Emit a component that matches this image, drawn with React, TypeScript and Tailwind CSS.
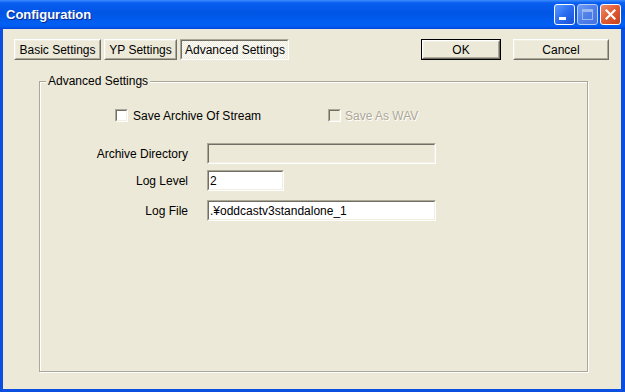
import type { ReactNode } from "react";

const font = { fontFamily: '"Liberation Sans", Arial, sans-serif' };

function RaisedButton({ width, children, isDefault }: { width: string; children: ReactNode; isDefault?: boolean }) {
  const bevel = (
    <div className="flex h-full w-full border border-t-white border-l-white border-r-[#716f64] border-b-[#716f64]">
      <div className="flex h-full w-full items-center justify-center border border-t-[#f1efe2] border-l-[#f1efe2] border-r-[#aca899] border-b-[#aca899] text-[12px] leading-none text-black">
        {children}
      </div>
    </div>
  );
  return (
    <div className={`h-[21px] shrink-0 ${width}`}>
      {isDefault ? <div className="h-full w-full border border-black">{bevel}</div> : bevel}
    </div>
  );
}

function PressedButton({ width, children }: { width: string; children: ReactNode }) {
  return (
    <div className={`h-[21px] shrink-0 ${width}`}>
      <div className="flex h-full w-full border border-t-[#aca899] border-l-[#aca899] border-r-white border-b-white">
        <div className="flex h-full w-full items-center justify-center border border-t-[#716f64] border-l-[#716f64] border-r-[#f1efe2] border-b-[#f1efe2] bg-[repeating-conic-gradient(#ffffff_0_25%,#ece9d8_0_50%)] bg-[length:2px_2px] pt-[1px] pl-[1px] text-[12px] leading-none text-black">
          {children}
        </div>
      </div>
    </div>
  );
}

function Sunken({ className, children }: { className: string; children?: ReactNode }) {
  return (
    <div className={`shrink-0 border border-t-[#aca899] border-l-[#aca899] border-r-white border-b-white ${className}`}>
      <div className="h-full w-full border border-t-[#716f64] border-l-[#716f64] border-r-[#f1efe2] border-b-[#f1efe2]">
        {children}
      </div>
    </div>
  );
}

function Checkbox({ disabled }: { disabled?: boolean }) {
  return (
    <div className="h-[13px] w-[13px] shrink-0 border border-t-[#aca899] border-l-[#aca899] border-r-white border-b-white">
      <div className={`h-full w-full border border-t-[#716f64] border-l-[#716f64] border-r-[#f1efe2] border-b-[#f1efe2] ${disabled ? "bg-[#ece9d8]" : "bg-white"}`} />
    </div>
  );
}

function TitleButtons() {
  return (
    <div className="flex items-center gap-[2px]">
      <div className="flex h-[21px] w-[21px] items-end rounded-[3px] border border-white bg-gradient-to-br from-[#5b9cff] via-[#2a6cf0] to-[#1a4fd4] pb-[4px] pl-[4px]">
        <div className="h-[3px] w-[7px] bg-white" />
      </div>
      <div className="flex h-[21px] w-[21px] items-center justify-center rounded-[3px] border border-[#b9cdf6] bg-gradient-to-br from-[#6d9cf6] via-[#4f7fe8] to-[#4573e2]">
        <div className="h-[11px] w-[11px] border border-t-[3px] border-[#9cb8f0]" />
      </div>
      <div className="flex h-[21px] w-[21px] items-center justify-center rounded-[3px] border border-white bg-gradient-to-br from-[#ee8a68] via-[#e05a32] to-[#c7401a]">
        <svg width="11" height="11" viewBox="0 0 11 11">
          <path d="M1.5 1.5 L9.5 9.5 M9.5 1.5 L1.5 9.5" stroke="#ffffff" strokeWidth="2.2" strokeLinecap="square" />
        </svg>
      </div>
    </div>
  );
}

export default function App() {
  return (
    <div style={font} className="flex h-[392px] w-[625px] flex-col bg-[#0a4fe0]">
      {/* Title bar */}
      <div className="flex h-[29px] shrink-0 items-center justify-between bg-[linear-gradient(180deg,#3c8dff_0%,#0a5ef0_10%,#0055e5_45%,#0060f4_85%,#0058ee_93%,#0042d6_100%)] pl-[6px] pr-[4px]">
        <span className="text-[13px] font-bold leading-none text-white [text-shadow:1px_1px_0_#0a2a8a]">Configuration</span>
        <TitleButtons />
      </div>

      {/* Client area */}
      <div className="mb-[3px] ml-[3px] mr-[4px] flex flex-1 flex-col bg-[#ece9d8] text-[12px] text-black">
        <div className="mt-[10px] flex pl-[11px] pr-[12px]">
          <RaisedButton width="w-[87px]">Basic Settings</RaisedButton>
          <div className="ml-[3px]">
            <RaisedButton width="w-[73px]">YP Settings</RaisedButton>
          </div>
          <div className="ml-[3px]">
            <PressedButton width="w-[109px]">Advanced Settings</PressedButton>
          </div>
          <div className="ml-auto">
            <RaisedButton width="w-[80px]" isDefault>OK</RaisedButton>
          </div>
          <div className="ml-[12px]">
            <RaisedButton width="w-[96px]">Cancel</RaisedButton>
          </div>
        </div>

        <fieldset className="ml-[36px] mt-[14px] h-[298px] w-[549px] border border-[#aca899] shadow-[inset_1px_1px_0_#ffffff,1px_1px_0_#ffffff]">
          <legend className="ml-[6px] bg-[#ece9d8] px-[2px] text-[12px] leading-[14px]">Advanced Settings</legend>

          <div className="mt-[21px] flex items-center">
            <div className="ml-[75px] flex w-[213px] items-center">
              <Checkbox />
              <span className="ml-[5px] leading-none">Save Archive Of Stream</span>
            </div>
            <div className="flex items-center">
              <Checkbox disabled />
              <span className="ml-[4px] leading-none text-[#aca899] [text-shadow:1px_1px_0_#ffffff]">Save As WAV</span>
            </div>
          </div>

          <div className="mt-[21px] flex items-center">
            <span className="w-[148px] text-right leading-none">Archive Directory</span>
            <Sunken className="ml-[19px] h-[21px] w-[229px] bg-[#ece9d8]" />
          </div>

          <div className="mt-[6px] flex items-center">
            <span className="w-[148px] text-right leading-none">Log Level</span>
            <Sunken className="ml-[19px] h-[21px] w-[77px] bg-white">
              <div className="pl-[1px] pt-[3px] leading-none">2</div>
            </Sunken>
          </div>

          <div className="mt-[9px] flex items-center">
            <span className="w-[148px] text-right leading-none">Log File</span>
            <Sunken className="ml-[19px] h-[21px] w-[229px] bg-white">
              <div className="pl-[1px] pt-[3px] leading-none">.¥oddcastv3standalone_1</div>
            </Sunken>
          </div>
        </fieldset>
      </div>
    </div>
  );
}
